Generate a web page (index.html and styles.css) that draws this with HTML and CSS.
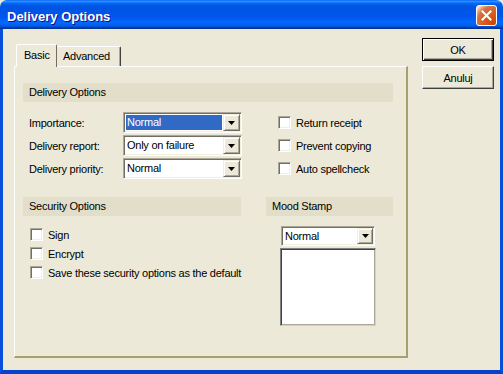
FILE: index.html
```html
<!DOCTYPE html>
<html>

<head>
    <title>Delivery Options</title>
    <link rel="stylesheet" href="styles.css">
</head>

<body>
    <div class="window">
        <div class="titlebar">
            <span class="title">Delivery Options</span>
            <button class="close" aria-label="Close">
                <svg width="11" height="11" viewBox="0 0 11 11">
                    <path d="M1.5 1.5 L9.5 9.5 M9.5 1.5 L1.5 9.5" stroke="#fff" stroke-width="2" fill="none" stroke-linecap="square"/>
                </svg>
            </button>
        </div>
        <div class="frame">
            <div class="tabctl">
                <div class="tabs">
                    <div class="tab active">Basic</div>
                    <div class="tab">Advanced</div>
                </div>
                <div class="panel">
                    <div class="group-head">Delivery Options</div>
                    <div class="delivery">
                        <label>Importance:</label>
                        <div class="combo">
                            <span class="value sel">Normal</span>
                            <span class="drop"><svg width="7" height="4" viewBox="0 0 7 4"><path d="M0 0H7L3.5 4Z" fill="#000"/></svg></span>
                        </div>
                        <div class="check"><span class="box"></span>Return receipt</div>

                        <label>Delivery report:</label>
                        <div class="combo">
                            <span class="value">Only on failure</span>
                            <span class="drop"><svg width="7" height="4" viewBox="0 0 7 4"><path d="M0 0H7L3.5 4Z" fill="#000"/></svg></span>
                        </div>
                        <div class="check"><span class="box"></span>Prevent copying</div>

                        <label>Delivery priority:</label>
                        <div class="combo">
                            <span class="value">Normal</span>
                            <span class="drop"><svg width="7" height="4" viewBox="0 0 7 4"><path d="M0 0H7L3.5 4Z" fill="#000"/></svg></span>
                        </div>
                        <div class="check"><span class="box"></span>Auto spellcheck</div>
                    </div>

                    <div class="lower">
                        <div class="security">
                            <div class="group-head">Security Options</div>
                            <div class="checks">
                                <div class="check"><span class="box"></span>Sign</div>
                                <div class="check"><span class="box"></span>Encrypt</div>
                                <div class="check"><span class="box"></span>Save these security options as the default</div>
                            </div>
                        </div>
                        <div class="mood">
                            <div class="group-head">Mood Stamp</div>
                            <div class="combo small">
                                <span class="value">Normal</span>
                                <span class="drop"><svg width="7" height="4" viewBox="0 0 7 4"><path d="M0 0H7L3.5 4Z" fill="#000"/></svg></span>
                            </div>
                            <div class="listbox"></div>
                        </div>
                    </div>
                </div>
            </div>
            <div class="buttons">
                <button class="btn default">OK</button>
                <button class="btn">Anuluj</button>
            </div>
        </div>
    </div>
</body>

</html>
```

FILE: styles.css
```css
html, body {
    margin: 0;
    padding: 0;
}

body {
    background: #ece9d8;
    font-family: "Liberation Sans", Arial, sans-serif;
    font-size: 11px;
    letter-spacing: -0.25px;
    color: #000;
}

.window {
    width: 503px;
    height: 374px;
    display: flex;
    flex-direction: column;
}

.titlebar {
    height: 29px;
    flex: none;
    display: flex;
    justify-content: space-between;
    align-items: flex-start;
    padding: 0 6px 0 7px;
    border-radius: 7px 7px 0 0;
    background: linear-gradient(#0058ee 0%, #3593ff 4%, #288eff 6%, #127dff 8%, #036ffc 10%, #0262ee 14%, #0057e5 20%, #0054e3 24%, #0055eb 56%, #005bf5 66%, #026afe 76%, #0062ef 86%, #0052d6 92%, #0040ab 94%, #003092 100%);
}

.title {
    padding-top: 9px;
    line-height: 15px;
    font-size: 13px;
    font-weight: bold;
    letter-spacing: 0;
    color: #fff;
    text-shadow: 1px 1px #0f1089;
}

.close {
    margin-top: 5px;
    width: 21px;
    height: 21px;
    padding: 0;
    border: 1px solid #fff;
    border-radius: 3px;
    background: radial-gradient(circle at 90% 90%, #cc4600 0%, #dc6527 55%, #cd7546 70%, #ffccb2 90%, #fff 100%);
    display: flex;
    align-items: center;
    justify-content: center;
}

.frame {
    flex: 1;
    display: flex;
    align-items: flex-start;
    padding: 9px 0 0 11px;
    background: #ece9d8;
    border-left: 3px solid #0a4fdc;
    border-right: 3px solid #0a4fdc;
    border-bottom: 4px solid #0842c8;
}

.tabctl {
    margin-top: 6px;
}

.tabs {
    display: flex;
    align-items: flex-end;
    height: 22px;
    padding-left: 2px;
}

.tab {
    box-sizing: border-box;
    height: 20px;
    line-height: 18px;
    padding-left: 6px;
    width: 64px;
    border-top: 1px solid #fff;
    border-right: 1px solid #404040;
    box-shadow: inset -1px 0 #aca899;
    border-radius: 2px 2px 0 0;
    background: #ece9d8;
}

.tab.active {
    position: relative;
    z-index: 1;
    width: 41px;
    height: 23px;
    margin-bottom: -1px;
    padding-left: 7px;
    line-height: 21px;
    border-left: 1px solid #fff;
    border-right: 1px solid #716f64;
    box-shadow: none;
}

.panel {
    box-sizing: border-box;
    width: 394px;
    height: 292px;
    padding: 16px 13px 0 8px;
    border-top: 1px solid #fff;
    border-left: 1px solid #fff;
    border-right: 2px solid #a5a070;
    border-bottom: 2px solid #a5a070;
}

.group-head {
    height: 19px;
    line-height: 19px;
    padding-left: 6px;
    background: #e2dec9;
}

.delivery {
    margin-top: 10px;
    display: grid;
    grid-template-columns: 100px 119px auto;
    grid-auto-rows: 21px;
    row-gap: 2px;
    align-items: center;
}

.delivery label {
    padding-left: 6px;
}

.delivery .check {
    padding-left: 36px;
}

.combo {
    box-sizing: border-box;
    display: flex;
    height: 21px;
    padding: 1px;
    border: 1px solid;
    border-color: #aca899 #fff #fff #aca899;
    box-shadow: inset 1px 1px #716f64, inset -1px -1px #f1efe2;
    background: #fff;
}

.value {
    flex: 1;
    margin: 1px;
    padding-left: 1px;
    line-height: 15px;
    white-space: nowrap;
}

.value.sel {
    background: #316ac5;
    color: #fff;
}

.drop {
    box-sizing: border-box;
    width: 17px;
    display: flex;
    align-items: center;
    justify-content: center;
    background: #ece9d8;
    border: 1px solid;
    border-color: #f1efe2 #716f64 #716f64 #f1efe2;
    box-shadow: inset 1px 1px #fff, inset -1px -1px #aca899;
}

.combo.small {
    width: 94px;
    height: 20px;
    margin: 10px 0 0 15px;
}

.combo.small .value {
    line-height: 14px;
}

.combo.small .drop {
    width: 16px;
}

.check {
    display: flex;
    align-items: center;
    gap: 5px;
    white-space: nowrap;
}

.box {
    box-sizing: border-box;
    width: 13px;
    height: 13px;
    flex: none;
    border: 1px solid;
    border-color: #aca899 #fff #fff #aca899;
    box-shadow: inset 1px 1px #716f64, inset -1px -1px #f1efe2;
    background: #fff;
}

.lower {
    margin-top: 18px;
    display: grid;
    grid-template-columns: 218px 127px;
    column-gap: 25px;
}

.checks {
    margin-top: 9px;
    padding-left: 7px;
    display: grid;
    grid-auto-rows: 19px;
}

.listbox {
    box-sizing: border-box;
    width: 96px;
    height: 78px;
    margin: 2px 0 0 14px;
    border: 1px solid;
    border-color: #808080 #d4d0c8 #d4d0c8 #808080;
    box-shadow: inset 1px 1px #404040, inset -1px -1px #aca899;
    background: #fff;
}

.buttons {
    margin-left: 14px;
    display: flex;
    flex-direction: column;
    gap: 5px;
}

.btn {
    box-sizing: border-box;
    width: 72px;
    height: 23px;
    padding: 0;
    font-family: inherit;
    font-size: 11px;
    letter-spacing: -0.25px;
    color: #000;
    background: #ece9d8;
    border: 1px solid;
    border-color: #fff #404040 #404040 #fff;
    box-shadow: inset -1px -1px #aca899;
}

.btn.default {
    border: 1px solid #000;
    box-shadow: inset 1px 1px #fff, inset -1px -1px #404040, inset -2px -2px #aca899;
}
```
